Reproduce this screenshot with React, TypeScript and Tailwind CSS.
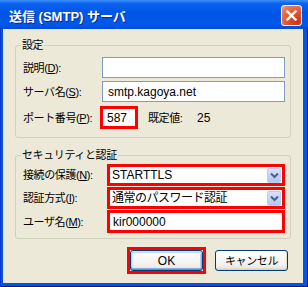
import React from "react";

function Acc({ children }: { children: React.ReactNode }) {
  return <span className="underline underline-offset-[1px] decoration-[1px]">{children}</span>;
}

function ComboBtn() {
  return (
    <div className="w-[14px] h-[15px] mr-[1px] shrink-0 rounded-[2px] border border-[#B9CCF4] bg-[linear-gradient(to_bottom,#D6E3FD_0%,#C3D4FB_50%,#B1C6F5_100%)] flex items-center justify-center">
      <svg width="9" height="7" viewBox="0 0 9 7">
        <path d="M1 1.5 L4.5 5 L8 1.5" fill="none" stroke="#4D6185" strokeWidth="2" />
      </svg>
    </div>
  );
}

export default function App() {
  return (
    <div className="w-[308px] h-[287px] flex flex-col bg-[#0055E5] shadow-[inset_1px_0_0_#0838C8,inset_-1px_0_0_#00209C,inset_0_-1px_0_#00188C] font-['Liberation_Sans','Noto_Sans_CJK_JP',sans-serif] text-[11px] tracking-[-0.4px] leading-[14px] text-black">
      {/* Title bar */}
      <div className="h-[29px] shrink-0 flex items-center pt-[2px] pl-[9px] pr-[6px] bg-[linear-gradient(to_bottom,#3D8FF7_0%,#0A62F0_12%,#0055E5_45%,#0058EB_85%,#0049D6_100%)]">
        <span className="flex-1 pt-[3px] text-white font-bold text-[13px] tracking-normal leading-[16px] [text-shadow:1px_1px_0_#0A2A8E]">
          送信 (SMTP) サーバ
        </span>
        <div className="w-[21px] h-[21px] rounded-[3px] border border-white bg-[radial-gradient(circle_at_80%_85%,#C4381A_0%,#DD5530_45%,#E77A5C_80%,#F0A48E_100%)] flex items-center justify-center">
          <svg width="11" height="11" viewBox="0 0 11 11">
            <path d="M1.5 1.5 L9.5 9.5 M9.5 1.5 L1.5 9.5" stroke="white" strokeWidth="2.4" strokeLinecap="square" />
          </svg>
        </div>
      </div>

      {/* Body */}
      <div className="flex-1 flex pl-[3px] pr-[5px] pb-[4px]">
        <div className="flex-1 bg-[#ECE9D8] flex flex-col px-[12px] pt-[9px]">
          {/* Group 1 */}
          <fieldset className="border border-[#D0D0BF] rounded-[3px] pl-[7px] pr-[5px] pt-[5px] pb-[8px]">
            <legend className="-ml-[2px] px-[1px] leading-[14px]">設定</legend>
            <div className="flex flex-col">
              <div className="flex items-center h-[21px]">
                <div className="w-[79px] shrink-0 whitespace-nowrap">
                  説明(<Acc>D</Acc>):
                </div>
                <div className="flex-1 h-full border border-[#7F9DB9] bg-white" />
              </div>
              <div className="flex items-center h-[21px] mt-[3px]">
                <div className="w-[79px] shrink-0 whitespace-nowrap">
                  サーバ名(<Acc>S</Acc>):
                </div>
                <div className="flex-1 h-full border border-[#7F9DB9] bg-white flex items-center pl-[5px] text-[12px] tracking-normal">
                  smtp.kagoya.net
                </div>
              </div>
              <div className="flex items-center h-[23px] mt-[4px]">
                <div className="w-[77px] shrink-0 whitespace-nowrap">
                  ポート番号(<Acc>P</Acc>):
                </div>
                <div className="w-[38px] h-full shrink-0 border-[3px] border-[#FF0000] bg-white flex items-center pl-[4px] text-[12px] tracking-normal">
                  587
                </div>
                <div className="ml-[10px] w-[49px] shrink-0 whitespace-nowrap">既定値:</div>
                <div className="text-[12px] tracking-normal">25</div>
              </div>
            </div>
          </fieldset>

          {/* Group 2 */}
          <fieldset className="mt-[10px] border border-[#D0D0BF] rounded-[3px] pl-[7px] pr-[5px] pt-[2px] pb-[5px]">
            <legend className="-ml-[2px] px-[1px] leading-[14px]">セキュリティと認証</legend>
            <div className="flex flex-col">
              <div className="flex items-center h-[22px]">
                <div className="w-[84px] shrink-0 whitespace-nowrap">
                  接続の保護(<Acc>N</Acc>):
                </div>
                <div className="flex-1 h-full border-[3px] border-[#FF0000] bg-white flex items-center pl-[2px]">
                  <div className="flex-1 text-[12px] tracking-normal">STARTTLS</div>
                  <ComboBtn />
                </div>
              </div>
              <div className="flex items-center h-[22px] mt-[1px]">
                <div className="w-[84px] shrink-0 whitespace-nowrap">
                  認証方式(<Acc>I</Acc>):
                </div>
                <div className="flex-1 h-full border-[3px] border-[#FF0000] bg-white flex items-center pl-[2px]">
                  <div className="flex-1 text-[12px] tracking-[-0.5px]">通常のパスワード認証</div>
                  <ComboBtn />
                </div>
              </div>
              <div className="flex items-center h-[23px] mt-[1px]">
                <div className="w-[84px] shrink-0 whitespace-nowrap">
                  ユーザ名(<Acc>M</Acc>):
                </div>
                <div className="flex-1 h-full border-[3px] border-[#FF0000] bg-white flex items-center pl-[3px] text-[12px] tracking-normal">
                  kir000000
                </div>
              </div>
            </div>
          </fieldset>

          {/* Buttons */}
          <div className="mt-[8px] flex justify-end items-center pr-[3px] gap-[9px]">
            <div className="border-[3px] border-[#FF0000] flex">
              <div className="w-[73px] h-[21px] rounded-[3px] border border-[#003C74] bg-[linear-gradient(to_bottom,#FFFFFF_0%,#F6F5F1_55%,#ECEBE6_85%,#DCD6CB_100%)] shadow-[inset_0_1px_0_#CEE7FF,inset_0_2px_0_#BCD4F6,inset_0_-1px_0_#6982EE,inset_0_-2px_0_#89ADE4,inset_1px_0_0_#B8D2F8,inset_-1px_0_0_#89ADE4,inset_2px_0_0_#CEE7FF,inset_-2px_0_0_#B8D2F8] flex items-center justify-center text-[12px] tracking-normal">
                OK
              </div>
            </div>
            <div className="w-[73px] h-[21px] rounded-[3px] border border-[#003C74] bg-[linear-gradient(to_bottom,#FFFFFF_0%,#F6F5F1_55%,#ECEBE6_85%,#D6D0C5_100%)] shadow-[inset_0_-1px_0_#D6D0C5,inset_-1px_0_0_#E2DED4] flex items-center justify-center">
              キャンセル
            </div>
          </div>
        </div>
      </div>
    </div>
  );
}
